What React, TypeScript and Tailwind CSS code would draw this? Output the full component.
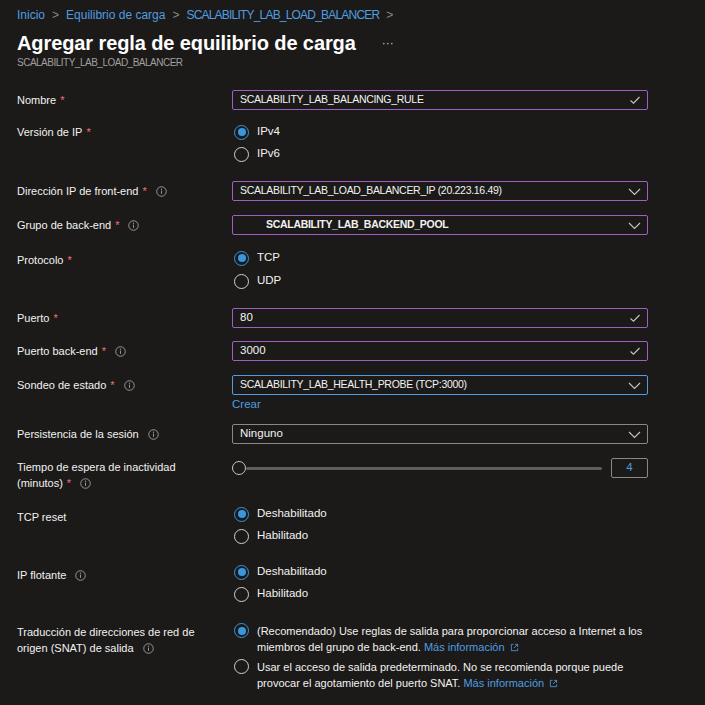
import { ReactNode } from "react"

const font = { fontFamily: '"Liberation Sans", Arial, sans-serif' }

function Info() {
  return (
    <svg width="11" height="11" viewBox="0 0 12 12" className="ml-[9px] inline-block shrink-0">
      <circle cx="6" cy="6" r="5.2" fill="none" stroke="#a19f9d" strokeWidth="1" />
      <rect x="5.5" y="5" width="1" height="3.6" fill="#a19f9d" />
      <circle cx="6" cy="3.5" r="0.7" fill="#a19f9d" />
    </svg>
  )
}

function Req() {
  return <span className="ml-[4px] text-[#f1707b]">*</span>
}

function Check() {
  return (
    <svg width="12" height="12" viewBox="0 0 12 12">
      <path d="M1.5 6.5 L4.5 9.2 L10.5 3" fill="none" stroke="#c8c6c4" strokeWidth="1.1" />
    </svg>
  )
}

function Chevron() {
  return (
    <svg width="13" height="13" viewBox="0 0 13 13">
      <path d="M1 4 L6.5 9.5 L12 4" fill="none" stroke="#c8c6c4" strokeWidth="1.1" />
    </svg>
  )
}

function External() {
  return (
    <svg width="9" height="9" viewBox="0 0 10 10" className="ml-[5px] inline-block">
      <path d="M4 1.5 H1.5 V8.5 H8.5 V6 M5.5 1.5 H8.5 V4.5 M8.5 1.5 L4.5 5.5" fill="none" stroke="#4f9de0" strokeWidth="0.9" />
    </svg>
  )
}

function Radio({ on }: { on?: boolean }) {
  return on ? (
    <span className="flex h-[15px] w-[15px] shrink-0 items-center justify-center rounded-full border border-[#3a96dd]">
      <span className="h-[8px] w-[8px] rounded-full bg-[#3a96dd]" />
    </span>
  ) : (
    <span className="block h-[15px] w-[15px] shrink-0 rounded-full border border-[#d2d0ce]" />
  )
}

function Option({ on, children }: { on?: boolean; children: ReactNode }) {
  return (
    <div className="flex h-[22px] items-center gap-[8px] pl-[2px] text-[11.5px] text-[#f3f2f1]">
      <Radio on={on} />
      <span>{children}</span>
    </div>
  )
}

function Field({
  value,
  icon,
  border = "border-[#9d5fc4]",
  bold,
  caps,
}: {
  value: string
  icon: "check" | "chevron"
  border?: string
  bold?: boolean
  caps?: boolean
}) {
  return (
    <div
      className={`flex h-[20px] w-[416px] items-center justify-between rounded-[2px] border ${border} pl-[7px] pr-[6px] text-[#f3f2f1] ${
        caps ? "text-[10.5px] tracking-[-0.3px]" : "text-[11.5px]"
      }`}
    >
      <span className={bold ? "pl-[26px] font-bold" : ""}>{value}</span>
      {icon === "check" ? <Check /> : <Chevron />}
    </div>
  )
}

function Row({ h, label, children }: { h: string; label: ReactNode; children: ReactNode }) {
  return (
    <div className={`flex ${h}`}>
      <div className="w-[215px] shrink-0 text-[11px] text-[#f3f2f1]">{label}</div>
      <div>{children}</div>
    </div>
  )
}

function LongOption({ on, first, second }: { on?: boolean; first: string; second: string }) {
  return (
    <div className="flex gap-[8px] pl-[2px] text-[11px] leading-[16px] text-[#f3f2f1]">
      <div className="shrink-0">
        <Radio on={on} />
      </div>
      <div>
        <div>{first}</div>
        <div className="flex items-center">
          <span>{second}</span>
          <span className="ml-[3px] text-[#4f9de0]">Más información</span>
          <External />
        </div>
      </div>
    </div>
  )
}

export default function App() {
  return (
    <div className="h-[705px] w-[705px] overflow-hidden bg-[#1b1a19] px-[17px]" style={font}>
      {/* Header */}
      <div className="h-[90px]">
        <div className="flex h-[30px] items-center pb-[1px] text-[12px] text-[#4f9de0]">
          <span>Inicio</span>
          <span className="mx-[7px] text-[#8a8886]">&gt;</span>
          <span>Equilibrio de carga</span>
          <span className="mx-[7px] text-[#8a8886]">&gt;</span>
          <span className="tracking-[-0.8px]">SCALABILITY_LAB_LOAD_BALANCER</span>
          <span className="mx-[7px] text-[#8a8886]">&gt;</span>
        </div>
        <div className="flex h-[26px] items-center">
          <h1 className="text-[20px] font-bold tracking-[-0.1px] text-white">Agregar regla de equilibrio de carga</h1>
          <span className="ml-[26px] text-[12px] text-[#c8c6c4]">···</span>
        </div>
        <div className="text-[10px] leading-[14px] tracking-[-0.5px] text-[#a19f9d]">SCALABILITY_LAB_LOAD_BALANCER</div>
      </div>

      {/* Form */}
      <Row h="h-[30px]" label={<div className="leading-[20px]">Nombre<Req /></div>}>
        <Field value="SCALABILITY_LAB_BALANCING_RULE" icon="check" caps />
      </Row>
      <Row h="h-[61px]" label={<div className="pt-[1px] leading-[22px]">Versión de IP<Req /></div>}>
        <div className="pt-[1px]">
          <Option on>IPv4</Option>
          <Option>IPv6</Option>
        </div>
      </Row>
      <Row
        h="h-[34px]"
        label={
          <div className="flex items-center leading-[20px]">
            Dirección IP de front-end<Req />
            <Info />
          </div>
        }
      >
        <Field value="SCALABILITY_LAB_LOAD_BALANCER_IP (20.223.16.49)" icon="chevron" caps />
      </Row>
      <Row
        h="h-[31px]"
        label={
          <div className="flex items-center leading-[20px]">
            Grupo de back-end<Req />
            <Info />
          </div>
        }
      >
        <Field value="SCALABILITY_LAB_BACKEND_POOL" icon="chevron" bold caps />
      </Row>
      <Row h="h-[62px]" label={<div className="pt-[3px] leading-[22px]">Protocolo<Req /></div>}>
        <div className="pt-[1px]">
          <Option on>TCP</Option>
          <div className="mt-[1px]">
            <Option>UDP</Option>
          </div>
        </div>
      </Row>
      <Row h="h-[33px]" label={<div className="leading-[20px]">Puerto<Req /></div>}>
        <Field value="80" icon="check" />
      </Row>
      <Row
        h="h-[34px]"
        label={
          <div className="flex items-center leading-[20px]">
            Puerto back-end<Req />
            <Info />
          </div>
        }
      >
        <Field value="3000" icon="check" />
      </Row>
      <Row
        h="h-[49px]"
        label={
          <div className="flex items-center leading-[20px]">
            Sondeo de estado<Req />
            <Info />
          </div>
        }
      >
        <Field value="SCALABILITY_LAB_HEALTH_PROBE (TCP:3000)" icon="chevron" border="border-[#4f9de0]" caps />
        <div className="mt-[1px] text-[11.5px] leading-[16px] text-[#4f9de0]">Crear</div>
      </Row>
      <Row
        h="h-[34px]"
        label={
          <div className="flex items-center leading-[20px]">
            Persistencia de la sesión
            <Info />
          </div>
        }
      >
        <Field value="Ninguno" icon="chevron" border="border-[#8a8886]" />
      </Row>
      <Row
        h="h-[45px]"
        label={
          <div className="pt-[1px] leading-[16px]">
            Tiempo de espera de inactividad
            <div className="flex items-center">
              (minutos)<Req />
              <Info />
            </div>
          </div>
        }
      >
        <div className="flex w-[416px] items-center">
          <div className="flex h-[20px] w-[370px] items-center">
            <span className="h-[14px] w-[14px] shrink-0 rounded-full border-[1.5px] border-[#c8c6c4] bg-[#1b1a19]" />
            <span className="h-[3px] flex-1 rounded-full bg-[#605e5c]" />
          </div>
          <div className="ml-auto flex h-[20px] w-[37px] items-center justify-center rounded-[2px] border border-[#8a8886] text-[11.5px] text-[#4f9de0]">
            4
          </div>
        </div>
      </Row>
      <Row h="h-[58px]" label={<div className="pt-[3px] leading-[22px]">TCP reset</div>}>
        <Option on>Deshabilitado</Option>
        <Option>Habilitado</Option>
      </Row>
      <Row
        h="h-[59px]"
        label={
          <div className="flex h-[22px] items-center pt-[6px]">
            IP flotante
            <Info />
          </div>
        }
      >
        <Option on>Deshabilitado</Option>
        <Option>Habilitado</Option>
      </Row>
      <Row
        h="h-[80px]"
        label={
          <div className="pt-[4px] leading-[16px]">
            Traducción de direcciones de red de
            <div className="flex items-center">
              origen (SNAT) de salida
              <Info />
            </div>
          </div>
        }
      >
        <div className="pt-[3px]">
          <LongOption
            on
            first="(Recomendado) Use reglas de salida para proporcionar acceso a Internet a los"
            second="miembros del grupo de back-end."
          />
        </div>
        <div className="mt-[4px]">
          <LongOption
            first="Usar el acceso de salida predeterminado. No se recomienda porque puede"
            second="provocar el agotamiento del puerto SNAT."
          />
        </div>
      </Row>
    </div>
  )
}
